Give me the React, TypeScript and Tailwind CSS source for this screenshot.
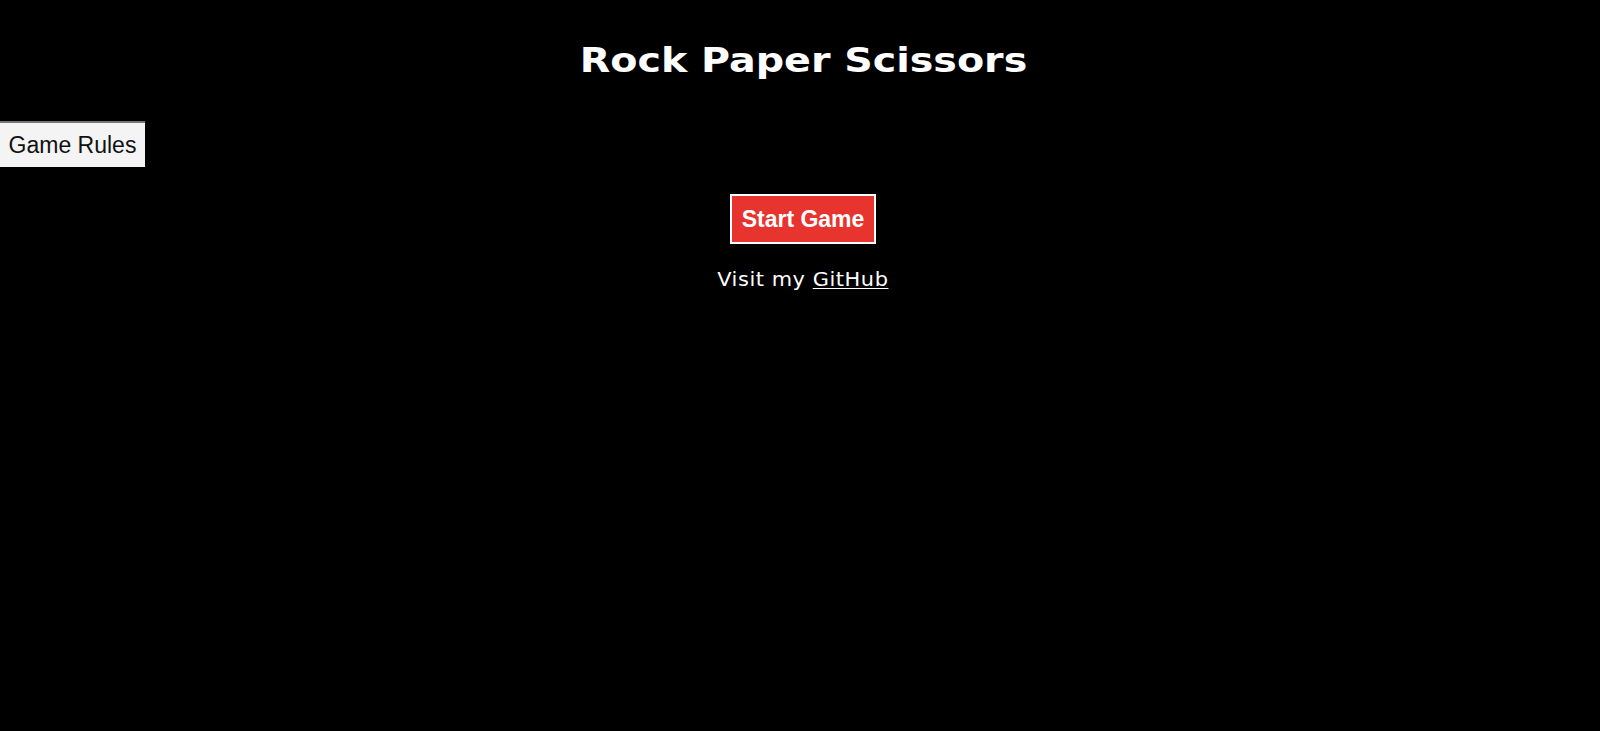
import React from 'react';

const App: React.FC = () => {
    return (
        <main className="min-h-screen w-full bg-black text-white">
            <h1 className="flex justify-center pl-[6px] pt-[41px] font-['DejaVu_Sans',sans-serif] text-[33px] font-bold leading-[40px]">
                <span className="inline-block scale-x-[1.2]">Rock Paper Scissors</span>
            </h1>

            <button className="mt-[40px] block h-[46px] w-[145px] border-t-2 border-t-[#777777] bg-[#f4f4f4] font-['Liberation_Sans',Arial,sans-serif] text-[23px] text-[#111111]">
                Game Rules
            </button>

            <div className="mt-[27px] flex flex-col items-center pl-[6px]">
                <button className="h-[50px] w-[146px] border-2 border-white bg-[#e8342f] font-['Liberation_Sans',Arial,sans-serif] text-[23px] font-bold text-white">
                    Start Game
                </button>
                <p className="mt-[23px] flex justify-center font-['DejaVu_Sans',sans-serif] text-[19px] leading-[24px] tracking-[0.5px]">
                    <span className="inline-block scale-x-[1.1]">
                        Visit my{' '}
                        <a href="#" className="underline underline-offset-2">
                            GitHub
                        </a>
                    </span>
                </p>
            </div>
        </main>
    );
};

export default App;
